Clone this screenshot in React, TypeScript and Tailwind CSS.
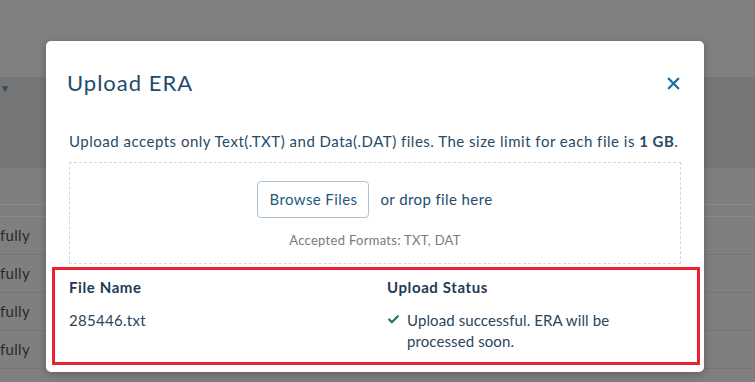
import { X, Check } from 'lucide-react';

const rows = ['fully', 'fully', 'fully', 'fully'];

function Backdrop() {
  return (
    <div className="flex flex-col w-full h-full">
      <div className="h-[77px] shrink-0 bg-[#808080]" />
      <div className="h-[91px] shrink-0 bg-[#767676] relative">
        <div className="pt-[6px] pl-0 text-[#2d4a63] text-[10px] leading-none">▼</div>
      </div>
      <div className="h-[37px] shrink-0 bg-[#7f7f7f] border-b border-[#8a8a8a]" />
      <div className="h-[12px] shrink-0 bg-[#7f7f7f] border-b border-[#8a8a8a]" />
      {rows.map((r, i) => (
        <div
          key={i}
          className="h-[38px] shrink-0 bg-[#7f7f7f] border-b border-[#767676] flex items-center text-[15px] tracking-[0.3px] text-[#2a2a2a]"
        >
          <span>{r}</span>
        </div>
      ))}
      <div className="h-[38px] shrink-0 bg-[#7f7f7f] flex items-center text-[14px] font-bold tracking-[1px]">
        <span className="ml-[245px] w-[130px] text-[#1f3d5a]">2322-10</span>
        <span className="w-[95px] text-[#2a2a2a]">00/00/0000</span>
        <span className="text-[#2a2a2a]">TEXT LOREM</span>
      </div>
    </div>
  );
}

export default function App() {
  return (
    <div
      className="relative w-[755px] h-[382px] overflow-hidden bg-[#7f7f7f]"
      style={{ fontFamily: 'Lato, "Open Sans", sans-serif' }}
    >
      <Backdrop />

      {/* Modal */}
      <div className="absolute left-[46px] top-[41px] w-[658px] h-[331px] bg-white rounded-[5px] shadow-[0_2px_8px_rgba(0,0,0,0.25)]">
        <div className="relative pt-[28px] px-[23px]">
          <div className="flex items-center justify-between h-[28px] -ml-[2px]">
            <h2 className="text-[22px] leading-[28px] tracking-[1px] text-[#1e4b6e]">Upload ERA</h2>
            <button className="text-[#1a6fa0] -mr-[2px]">
              <X className="w-[19px] h-[19px]" strokeWidth={3} />
            </button>
          </div>

          <p className="mt-[34px] whitespace-nowrap text-[15px] leading-[20px] tracking-[0.5px] text-[#254a68]">
            Upload accepts only Text(.TXT) and Data(.DAT) files. The size limit for each file is{' '}
            <span className="font-bold">1 GB</span>.
          </p>

          <div className="mt-[11px] h-[102px] border border-dashed border-[#cdd9e3] flex flex-col items-center">
            <div className="mt-[18px] flex items-center gap-[11px]">
              <button className="w-[112px] h-[37px] border border-[#a9c4d8] rounded-[4px] text-[15px] tracking-[0.4px] text-[#1e5a82]">
                Browse Files
              </button>
              <span className="text-[15px] tracking-[0.4px] text-[#1e4b6e]">or drop file here</span>
            </div>
            <div className="mt-[14px] text-[13px] leading-[16px] tracking-[0.3px] text-[#7a7a7a]">
              Accepted Formats: TXT, DAT
            </div>
          </div>

          <div className="mt-[13px] grid grid-cols-[318px_1fr] text-[15px]">
            <div className="font-bold leading-[20px] tracking-[0.6px] text-[#1d3a55]">File Name</div>
            <div className="font-bold leading-[20px] tracking-[0.6px] text-[#1d3a55]">Upload Status</div>
            <div className="mt-[13px] leading-[21px] tracking-[0.3px] text-[#2b4560]">285446.txt</div>
            <div className="mt-[13px] flex items-start gap-[7px] leading-[21px] tracking-[0.1px] text-[#2b4560]">
              <Check className="w-[13px] h-[13px] mt-[3px] shrink-0 text-[#17785a]" strokeWidth={4} />
              <span className="w-[240px]">Upload successful. ERA will be processed soon.</span>
            </div>
          </div>
        </div>

        {/* highlight annotation */}
        <div className="absolute left-[6px] top-[226px] w-[648px] h-[98px] border-[3px] border-[#e8232e] pointer-events-none" />
      </div>
    </div>
  );
}
